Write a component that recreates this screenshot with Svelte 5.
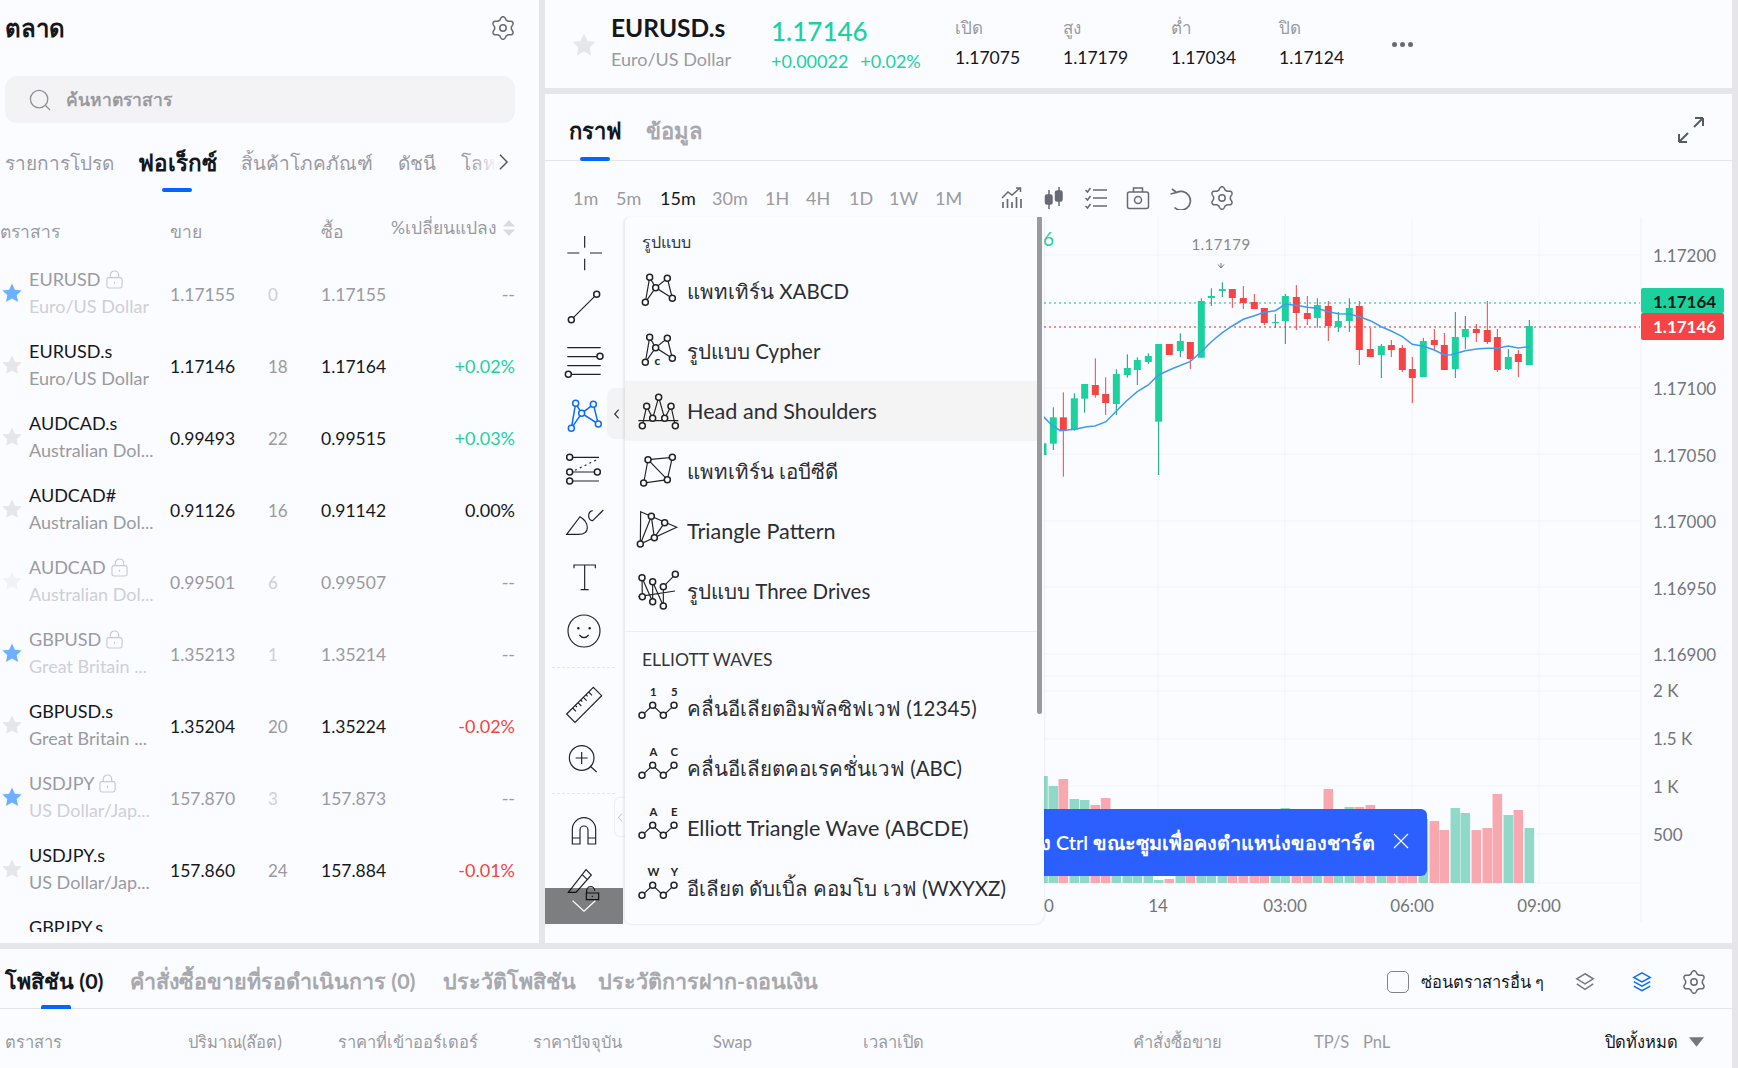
<script>
  const rows = [
    { name: 'EURUSD', sub: 'Euro/US Dollar', sell: '1.17155', spread: '0', buy: '1.17155', change: '--', locked: true, fav: true },
    { name: 'EURUSD.s', sub: 'Euro/US Dollar', sell: '1.17146', spread: '18', buy: '1.17164', change: '+0.02%', dir: 'up' },
    { name: 'AUDCAD.s', sub: 'Australian Dol...', sell: '0.99493', spread: '22', buy: '0.99515', change: '+0.03%', dir: 'up' },
    { name: 'AUDCAD#', sub: 'Australian Dol...', sell: '0.91126', spread: '16', buy: '0.91142', change: '0.00%' },
    { name: 'AUDCAD', sub: 'Australian Dol...', sell: '0.99501', spread: '6', buy: '0.99507', change: '--', locked: true },
    { name: 'GBPUSD', sub: 'Great Britain ...', sell: '1.35213', spread: '1', buy: '1.35214', change: '--', locked: true, fav: true },
    { name: 'GBPUSD.s', sub: 'Great Britain ...', sell: '1.35204', spread: '20', buy: '1.35224', change: '-0.02%', dir: 'down' },
    { name: 'USDJPY', sub: 'US Dollar/Jap...', sell: '157.870', spread: '3', buy: '157.873', change: '--', locked: true, fav: true },
    { name: 'USDJPY.s', sub: 'US Dollar/Jap...', sell: '157.860', spread: '24', buy: '157.884', change: '-0.01%', dir: 'down' },
    { name: 'GBPJPY.s', sub: '', sell: '', spread: '', buy: '', change: '' }
  ];

  const stats = [
    { label: 'เปิด', value: '1.17075' },
    { label: 'สูง', value: '1.17179' },
    { label: 'ต่ำ', value: '1.17034' },
    { label: 'ปิด', value: '1.17124' }
  ];

  const frames = ['1m', '5m', '15m', '30m', '1H', '4H', '1D', '1W', '1M'];

  // candles: x, wick top, wick bottom, body top, body bottom, up?
  // values taken in 3x units of the chart area, origin at (1030, 220)
  const raw = [
    [39,670,705,670,705,1],[70,562,690,592,671,1],[100,517,770,592,633,0],[133,520,632,535,629,1],
    [164,492,578,492,536,1],[196,415,533,495,525,0],[227,472,585,522,549,0],[259,448,585,462,552,1],
    [292,403,473,444,465,1],[322,412,495,420,450,1],[355,400,432,408,426,1],[386,372,765,372,605,1],
    [418,372,405,372,405,0],[451,340,411,363,393,1],[481,366,447,366,417,0],[514,235,414,243,413,1],
    [544,205,258,228,234,1],[577,187,231,207,213,1],[607,207,264,207,234,0],[640,198,267,234,249,0],
    [673,222,267,246,267,0],[703,264,315,264,309,0],[736,282,324,306,309,1],[766,222,372,228,303,1],
    [799,195,330,231,279,0],[832,228,315,279,297,0],[862,235,323,255,294,1],[895,243,363,258,318,0],
    [925,276,336,303,321,1],[958,235,336,264,303,1],[988,243,435,258,390,0],[1021,324,411,387,411,0],
    [1054,372,474,378,405,1],[1084,360,411,375,390,0],[1117,375,456,384,450,0],[1147,411,549,447,474,0],
    [1180,354,471,363,471,1],[1213,327,390,360,375,0],[1243,339,450,375,450,0],[1276,276,474,351,447,1],
    [1306,288,387,327,351,1],[1339,312,366,327,339,0],[1372,243,372,330,366,0],[1402,327,456,351,450,0],
    [1435,387,450,411,447,1],[1465,390,471,402,426,0],[1498,300,435,318,435,1]
  ];

  const volumeTops = {
    0: 776, 1: 786, 2: 779, 3: 799, 4: 800, 5: 805, 6: 798, 11: 880, 12: 879,
    23: 808, 27: 789, 29: 807, 30: 807, 31: 805, 36: 819, 37: 821, 38: 830, 39: 808,
    40: 813, 41: 830, 42: 828, 43: 794, 44: 815, 45: 810, 46: 828
  };

  const candles = raw.map(([x, wt, wb, bt, bb, up], i) => ({
    x: 1030 + x / 3,
    wickTop: 220 + wt / 3,
    wickBottom: 220 + wb / 3,
    bodyTop: 220 + bt / 3,
    bodyHeight: Math.max((bb - bt) / 3, 1),
    up: !!up,
    volumeTop: volumeTops[i] ?? 840
  }));

  const maLine = [
    [39,588],[60,610],[90,632],[135,628],[170,620],[195,618],[228,605],[260,572],[290,542],[322,515],
    [355,495],[385,465],[400,458],[430,445],[480,425],[514,395],[544,365],[577,338],[607,318],[640,298],
    [673,287],[703,277],[736,272],[766,253],[799,256],[832,262],[862,265],[895,275],[925,281],[958,282],
    [988,290],[1021,302],[1054,320],[1084,333],[1117,350],[1147,373],[1180,379],[1213,390],[1243,405],
    [1264,404],[1306,392],[1339,387],[1372,385],[1402,385],[1435,378],[1465,384],[1498,380]
  ].map(([x, y]) => `${(1030 + x / 3).toFixed(1)},${(220 + y / 3).toFixed(1)}`).join(' ');

  const priceLabels = [
    ['1.17200', 255], ['1.17100', 388], ['1.17050', 455], ['1.17000', 521], ['1.16950', 588], ['1.16900', 654]
  ];
  const volumeLabels = [['2 K', 691], ['1.5 K', 739], ['1 K', 787], ['500', 835]];
  const gridY = [255, 321, 388, 454, 521, 587, 654, 676, 691, 739, 786, 834, 883];
  const gridX = [1158, 1285, 1412, 1539];
  const times = [['0', 1049], ['14', 1158], ['03:00', 1285], ['06:00', 1412], ['09:00', 1539]];

  // six lobed gear outline, 24 unit box
  function makeGear() {
    let d = '';
    for (let i = 0; i < 120; i++) {
      const a = (i / 120) * Math.PI * 2;
      const r = 9.6 + 1.7 * Math.max(-0.7, Math.cos(6 * a));
      d += `${i ? 'L' : 'M'}${(12 + r * Math.sin(a)).toFixed(2)} ${(12 - r * Math.cos(a)).toFixed(2)}`;
    }
    return d + 'Z';
  }
  const gear = makeGear();

  const bottomTabs = ['โพสิชัน (0)', 'คำสั่งซื้อขายที่รอดำเนินการ (0)', 'ประวัติโพสิชัน', 'ประวัติการฝาก-ถอนเงิน'];
  const columns = ['ตราสาร', 'ปริมาณ(ล๊อต)', 'ราคาที่เข้าออร์เดอร์', 'ราคาปัจจุบัน', 'Swap', 'เวลาเปิด', 'คำสั่งซื้อขาย', 'TP/S', 'PnL'];
  const elliott = [
    { text: 'คลื่นอีเลียตอิมพัลซิฟเวฟ (12345)', a: '1', b: '5' },
    { text: 'คลื่นอีเลียตคอเรคชั่นเวฟ (ABC)', a: 'A', b: 'C' },
    { text: 'Elliott Triangle Wave (ABCDE)', a: 'A', b: 'E', latin: true },
    { text: 'อีเลียต ดับเบิ้ล คอมโบ เวฟ (WXYXZ)', a: 'W', b: 'Y' }
  ];
</script>

{#snippet gearIcon(cls)}
  <svg class={cls} viewBox="0 0 24 24" fill="none" stroke="currentColor" stroke-width="1.5">
    <path d={gear} /><circle cx="12" cy="12" r="3.2" />
  </svg>
{/snippet}

{#snippet star(fav, faint)}
  <svg class="star" class:fav class:faint viewBox="0 0 24 24">
    <path d="M12 1.5l3.2 6.9 7.3.9-5.4 5.1 1.5 7.4-6.6-3.7-6.6 3.7 1.5-7.4-5.4-5.1 7.3-.9z" />
  </svg>
{/snippet}

{#snippet nodes(points, color)}
  {#each points as p}
    <circle cx={p[0]} cy={p[1]} r="9" fill="#fafcff" stroke={color} stroke-width="4.5" />
  {/each}
{/snippet}

{#snippet patternIcon(cy, color)}
  <svg class="tool-svg" viewBox="{36} {cy - 66} 132 132" fill="none" stroke={color} stroke-width="4.5">
    <path d="M64 {cy + 40}L77 {cy - 35}L95 {cy - 5}L130 {cy - 32}L145 {cy + 27}L95 {cy - 5}L64 {cy + 40}" />
    {@render nodes([[77, cy - 35], [130, cy - 32], [95, cy - 5], [64, cy + 40], [145, cy + 27]], color)}
  </svg>
{/snippet}

{#snippet lock()}
  <svg class="lock" viewBox="0 0 18 20" fill="none" stroke="currentColor" stroke-width="1.2">
    <rect x="1" y="8" width="16" height="11" rx="2" /><path d="M4.5 8V5.5a4.5 4.5 0 0 1 9 0V8M9 12.5v2" />
  </svg>
{/snippet}

<div class="app">
  <aside class="market">
    <div class="market-title">
      <h1>ตลาด</h1>
      {@render gearIcon('gear')}
    </div>
    <div class="search">
      <svg viewBox="0 0 24 24" fill="none" stroke="currentColor" stroke-width="1.4">
        <circle cx="11" cy="11" r="9.5" /><path d="M18 18L23 23" />
      </svg>
      <span>ค้นหาตราสาร</span>
    </div>
    <nav class="market-tabs">
      <span>รายการโปรด</span>
      <span class="active">ฟอเร็กซ์</span>
      <span>สิ้นค้าโภคภัณฑ์</span>
      <span>ดัชนี</span>
      <span>โลหะ</span>
      <div class="tabs-more">
        <svg viewBox="0 0 12 20" fill="none" stroke="#555" stroke-width="1.6"><path d="M2 2l8 8-8 8" /></svg>
      </div>
    </nav>
    <div class="list-head">
      <span>ตราสาร</span>
      <span>ขาย</span>
      <span></span>
      <span>ซื้อ</span>
      <span class="change-head">%เปลี่ยนแปลง
        <svg viewBox="0 0 12 16" fill="#d9d9de"><path d="M6 0l6 6.5H0zM6 16l6-6.5H0z" /></svg>
      </span>
    </div>
    <div class="list">
      {#each rows as row}
        <div class="row" class:locked={row.locked}>
          {@render star(row.fav, row.locked && !row.fav)}
          <div class="names">
            <div class="symbol">{row.name}{#if row.locked}{@render lock()}{/if}</div>
            <div class="sub">{row.sub}</div>
          </div>
          <div class="num">{row.sell}</div>
          <div class="spread">{row.spread}</div>
          <div class="num">{row.buy}</div>
          <div class="change {row.dir ?? ''}">{row.change}</div>
        </div>
      {/each}
    </div>
  </aside>

  <main class="right">
    <header class="quote">
      {@render star(false, false)}
      <div class="quote-name">
        <div class="quote-symbol">EURUSD.s</div>
        <div class="quote-sub">Euro/US Dollar</div>
      </div>
      <div class="quote-price">
        <div class="price">1.17146</div>
        <div class="delta"><span>+0.00022</span><span>+0.02%</span></div>
      </div>
      {#each stats as s}
        <div class="stat">
          <div class="stat-label">{s.label}</div>
          <div class="stat-value">{s.value}</div>
        </div>
      {/each}
      <div class="dots"><i></i><i></i><i></i></div>
    </header>

    <section class="chart-panel">
      <div class="chart-tabs">
        <span class="active">กราฟ</span>
        <span>ข้อมูล</span>
        <svg class="expand" viewBox="0 0 26 26" fill="none" stroke="#555b66" stroke-width="2">
          <path d="M1 25L10 16M1 25v-8M1 25h8M25 1l-9 9M25 1v8M25 1h-8" />
        </svg>
      </div>
      <div class="frames">
        <div class="frame-list">
          {#each frames as f}
            <span class:current={f === '15m'}>{f}</span>
          {/each}
        </div>
        <div class="chart-tools">
          <svg viewBox="0 0 24 24" fill="none" stroke="currentColor" stroke-width="1.7">
            <path d="M3 22v-6M7.5 22v-9M12 22v-6M16.5 22v-11M21 22v-9" />
            <path d="M2 12l6-6 4 3 8-7M16 2h4.5v4" stroke-width="1.5" />
          </svg>
          <svg viewBox="0 0 24 24" fill="currentColor" stroke="currentColor" stroke-width="1.5">
            <path d="M7 4v19M17 1v19" fill="none" /><rect x="3.5" y="9" width="6.5" height="9" rx="1.5" /><rect x="13.5" y="5" width="6.5" height="10" rx="1.5" />
          </svg>
          <svg viewBox="0 0 24 24" fill="none" stroke="currentColor" stroke-width="1.5">
            <path d="M9 4h14M9 12h14M9 20h14M1.5 4l2 2 3-4M1.5 12l2 2 3-4M1.5 20l2 2 3-4" />
          </svg>
          <svg viewBox="0 0 24 24" fill="none" stroke="currentColor" stroke-width="1.5">
            <rect x="1.5" y="6" width="21" height="16.5" rx="2" /><path d="M7.5 6V2h9v4" /><circle cx="12" cy="14" r="3.5" />
          </svg>
          <svg viewBox="0 0 24 24" fill="none" stroke="currentColor" stroke-width="1.7">
            <path d="M4 3l4.5 3.5a9.4 9.4 0 1 1-2 15M8.5 6.5L2.5 8" />
          </svg>
          {@render gearIcon('tool-gear')}
        </div>
      </div>
      <div class="chart-body">
        <div class="toolbar">
          <div class="tool"><svg class="tool-svg" viewBox="36 32 132 132" fill="none" stroke="#222" stroke-width="3.5"><path d="M104 47v35M104 115v35M52 98h36M120 98h36" /></svg></div>
          <div class="tool"><svg class="tool-svg" viewBox="36 192 132 132" fill="none" stroke="#222" stroke-width="3.5"><path d="M64 296L140 220" />{@render nodes([[64, 296], [140, 220]], '#222')}</svg></div>
          <div class="tool"><svg class="tool-svg" viewBox="36 352 132 132" fill="none" stroke="#222" stroke-width="3.5"><path d="M52 378h100M52 405h100M52 432h100M55 458h97" />{@render nodes([[150, 404], [55, 458]], '#222')}</svg></div>
          <div class="tool picked">{@render patternIcon(580, '#0a6cff')}<span class="picked-tab"><svg viewBox="0 0 8 14" fill="none" stroke="#333" stroke-width="1.4"><path d="M6.5 2L2 7l4.5 5" /></svg></span></div>
          <div class="tool"><svg class="tool-svg" viewBox="36 680 132 132" fill="none" stroke="#222" stroke-width="3.5"><path d="M59 711h88M59 755h83M59 782h88" /><path d="M75 750L147 715" stroke-dasharray="6 10" />{@render nodes([[59, 711], [142, 755], [59, 755], [59, 782]], '#222')}</svg></div>
          <div class="tool"><svg class="tool-svg" viewBox="36 845 132 132" fill="none" stroke="#222" stroke-width="3.5"><path d="M50 945L90 892Q112 905 112 925T85 945ZM116 892Q115 876 128 874M160 872L128 904Q118 904 116 892" /></svg></div>
          <div class="tool"><svg class="tool-svg" viewBox="36 1002 132 132" fill="none" stroke="#222" stroke-width="3.5"><path d="M72 1042V1032H136V1042M104 1032V1106M92 1106H116" /></svg></div>
          <div class="tool"><svg class="tool-svg" viewBox="36 1164 132 132" fill="none" stroke="#222" stroke-width="3.5"><circle cx="102" cy="1230" r="48" /><path d="M88 1242Q102 1258 116 1242" /><circle cx="85" cy="1222" r="2" fill="#222" /><circle cx="119" cy="1222" r="2" fill="#222" /></svg></div>
          <div class="tool-sep"></div>
          <div class="tool"><svg class="tool-svg" viewBox="36 184 132 132" fill="none" stroke="#222" stroke-width="3.5"><path d="M50 280L130 200L155 225L75 305ZM68 262l10 10M84 246l10 10M100 230l10 10M116 214l10 10M76 254l5 5M92 238l5 5M108 222l5 5" /></svg></div>
          <div class="tool"><svg class="tool-svg" viewBox="36 342 132 132" fill="none" stroke="#222" stroke-width="3.5"><circle cx="95" cy="408" r="37" /><path d="M95 390v36M77 408h36M120 432l20 18" /></svg></div>
          <div class="tool-sep"></div>
          <div class="tool"><svg class="tool-svg" viewBox="36 564 132 132" fill="none" stroke="#222" stroke-width="3.5"><path d="M67 672V628a35 35 0 0 1 70 0V672H114V630a12 12 0 0 0-24 0V672ZM67 654H90M114 654H137" /></svg></div>
          <div class="tool"><svg class="tool-svg" viewBox="36 729 132 132" fill="none" stroke="#222" stroke-width="3.5"><path d="M55 820L108 752L124 768L78 820ZM96 766L112 782M110 823v-8a12 12 0 0 1 24 0M109 822h37v20h-37zM127 830v4" /></svg></div>
          <div class="side-handle"><svg viewBox="0 0 8 14" fill="none" stroke="#c9c9ce" stroke-width="1.4"><path d="M6.5 2L2 7l4.5 5" /></svg></div>
          <div class="more-tools">
            <svg viewBox="0 0 30 16" fill="none" stroke="#fff" stroke-width="1.4"><path d="M2 2l13 12L28 2" /></svg>
          </div>
        </div>

        <div class="menu">
          <div class="scrollbar"></div>
          <div class="menu-title first">รูปแบบ</div>
          <div class="menu-item">
            <svg class="menu-svg" viewBox="258 150 132 132" fill="none" stroke="#222" stroke-width="3.5"><path d="M286 250L299 175L317 206L352 178L367 238L317 206L286 250" />{@render nodes([[299, 175], [352, 178], [317, 206], [286, 250], [367, 238]], '#222')}</svg>
            <span>แพทเทิร์น XABCD</span>
          </div>
          <div class="menu-item">
            <svg class="menu-svg" viewBox="258 330 132 132" fill="none" stroke="#222" stroke-width="3.5"><path d="M286 430L299 355L317 386L352 358L367 418L317 386L286 430" />{@render nodes([[299, 355], [352, 358], [317, 386], [286, 430], [367, 418]], '#222')}<text x="322" y="437" class="icon-c">c</text></svg>
            <span>รูปแบบ Cypher</span>
          </div>
          <div class="menu-item hover latin">
            <svg class="menu-svg" viewBox="258 505 132 132" fill="none" stroke="#222" stroke-width="3.5"><path d="M265 600H385M277 615L290 557L308 593L326 530L344 593L363 557L376 615" />{@render nodes([[277, 615], [290, 557], [308, 593], [326, 530], [344, 593], [363, 557], [376, 615]], '#222')}</svg>
            <span>Head and Shoulders</span>
          </div>
          <div class="menu-item">
            <svg class="menu-svg" viewBox="258 690 132 132" fill="none" stroke="#222" stroke-width="3.5"><path d="M294 722L367 715L352 782L281 792ZM294 722L352 782" />{@render nodes([[294, 722], [367, 715], [352, 782], [281, 792]], '#222')}</svg>
            <span>แพทเทิร์น เอบีซีดี</span>
          </div>
          <div class="menu-item latin">
            <svg class="menu-svg" viewBox="258 867 132 132" fill="none" stroke="#222" stroke-width="3.5"><path d="M272 875L380 922L271 972ZM271 972L304 889L313 953L344 908" />{@render nodes([[304, 889], [344, 908], [313, 953], [271, 972]], '#222')}</svg>
            <span>Triangle Pattern</span>
          </div>
          <div class="menu-item">
            <svg class="menu-svg" viewBox="258 1049 132 132" fill="none" stroke="#222" stroke-width="3.5"><path d="M277 1132L276 1075L308 1147L308 1087L340 1160L340 1102L376 1065M265 1132L375 1115" />{@render nodes([[276, 1075], [308, 1087], [340, 1102], [277, 1132], [308, 1147], [340, 1160], [376, 1065]], '#222')}</svg>
            <span>รูปแบบ Three Drives</span>
          </div>
          <div class="menu-sep"></div>
          <div class="menu-title waves">ELLIOTT WAVES</div>
          {#each elliott as item}
            <div class="menu-item" class:latin={item.latin}>
              <svg class="menu-svg" viewBox="258 197 132 132" fill="none" stroke="#222" stroke-width="3.5">
                <path d="M276 285L308 255L340 285L372 255" />
                {@render nodes([[276, 285], [308, 255], [340, 285], [372, 255]], '#222')}
                <text x="310" y="228" class="icon-label">{item.a}</text>
                <text x="373" y="228" class="icon-label">{item.b}</text>
              </svg>
              <span>{item.text}</span>
            </div>
          {/each}
        </div>

        <div class="chart">
          <svg class="plot" viewBox="1044 217 688 726">
            {#each gridY as y}
              <line x1="1044" x2="1641" y1={y} y2={y} stroke="#f1f3f6" />
            {/each}
            {#each gridX as x}
              <line x1={x} x2={x} y1="217" y2="883" stroke="#f1f3f6" />
            {/each}
            <line x1="1641" x2="1641" y1="217" y2="923" stroke="#eef0f3" />
            {#each candles as c}
              <rect x={c.x - 4.8} y={c.volumeTop} width="9.6" height={883 - c.volumeTop} fill={c.up ? '#90d8c8' : '#f9a8b0'} />
            {/each}
            <line x1="1044" x2="1640" y1="303" y2="303" stroke="#4fd6b0" stroke-width="1.4" stroke-dasharray="2 3" />
            <line x1="1044" x2="1640" y1="327" y2="327" stroke="#f76a6a" stroke-width="1.4" stroke-dasharray="2 3" />
            {#each candles as c}
              <line x1={c.x} x2={c.x} y1={c.wickTop} y2={c.wickBottom} stroke={c.up ? '#0d9c80' : '#f64343'} />
              <rect x={c.x - 3.5} y={c.bodyTop} width="7" height={c.bodyHeight} fill={c.up ? '#1dd19f' : '#f64343'} />
            {/each}
            <polyline points={maLine} fill="none" stroke="#3d9bf5" stroke-width="1.5" />
            <text x="1221" y="250" class="high" text-anchor="middle">1.17179</text>
            <path d="M1221 263v5M1218 264.5l3 3.5 3-3.5" fill="none" stroke="#777" stroke-width="1" />
            <text x="1043" y="246" class="cut-value">6</text>
            {#each priceLabels as [text, y]}
              <text x="1653" y={y + 7} class="axis">{text}</text>
            {/each}
            {#each volumeLabels as [text, y]}
              <text x="1653" y={y + 6} class="axis">{text}</text>
            {/each}
            {#each times as [text, x]}
              <text {x} y="912" class="axis" text-anchor="middle">{text}</text>
            {/each}
            <rect x="1641" y="288" width="83" height="25" rx="2" fill="#1dd19f" />
            <rect x="1641" y="313" width="83" height="27" rx="2" fill="#f64343" />
            <text x="1653" y="308" class="axis tag-dark">1.17164</text>
            <text x="1653" y="333" class="axis tag-light">1.17146</text>
          </svg>
          <div class="toast">
            <span>กดค้าง Ctrl ขณะซูมเพื่อคงตำแหน่งของชาร์ต</span>
            <svg viewBox="0 0 16 16" fill="none" stroke="#fff" stroke-width="1.1"><path d="M1 1l14 14M15 1L1 15" /></svg>
          </div>
        </div>
      </div>
    </section>
  </main>

  <footer class="positions">
    <div class="pos-tabs">
      {#each bottomTabs as tab, i}
        <span class:active={i === 0}>{tab}</span>
      {/each}
      <div class="pos-tools">
        <label class="check"><i></i>ซ่อนตราสารอื่น ๆ</label>
        <svg viewBox="0 0 24 24" fill="none" stroke="#777" stroke-width="1.6"><path d="M12 3l9 5.5-9 5.5-9-5.5zM3 14l9 6 9-6" /></svg>
        <svg viewBox="0 0 24 24" fill="none" stroke="#0a6cff" stroke-width="1.6"><path d="M12 2l9 5-9 5-9-5zM3 11.5l9 5 9-5M3 16.5l9 5 9-5" /></svg>
        {@render gearIcon('pos-gear')}
      </div>
    </div>
    <div class="pos-head">
      {#each columns as c}
        <span>{c}</span>
      {/each}
      <span class="close-all">ปิดทั้งหมด<svg viewBox="0 0 16 10" fill="#777"><path d="M0 0h16L8 10z" /></svg></span>
    </div>
  </footer>
</div>

<style>
  :global(body) {
    margin: 0;
    background: #e6e6ea;
  }

  .app {
    width: 1738px;
    height: 1068px;
    display: grid;
    grid-template-columns: 539px 1187px;
    grid-template-rows: 943px 119px;
    column-gap: 6px;
    row-gap: 6px;
    background: #e6e6ea;
    font-family: 'Lato', 'Noto Sans', 'Noto Sans CJK SC', sans-serif;
    color: #15171c;
    overflow: hidden;
  }

  /* market list */
  .market {
    background: #fafcff;
    overflow: hidden;
    display: flex;
    flex-direction: column;
  }

  .market-title {
    height: 56px;
    display: flex;
    align-items: center;
    justify-content: space-between;
    padding: 0 24px 0 5px;
  }

  h1 {
    margin: 0;
    font-size: 24px;
    font-weight: 700;
  }

  .gear {
    width: 24px;
    height: 24px;
    color: #676a73;
  }

  .search {
    margin: 20px 24px 0 5px;
    height: 47px;
    border-radius: 12px;
    background: #f3f3f5;
    display: flex;
    align-items: center;
    gap: 15px;
    padding-left: 24px;
    font-size: 17.5px;
    font-weight: 700;
    color: #9a9a9f;
  }

  .search svg {
    width: 22px;
    height: 22px;
    color: #8c8f96;
  }

  .market-tabs {
    position: relative;
    height: 69px;
    display: grid;
    grid-template-columns: 133px 103px 157px 63px 60px;
    padding-left: 5px;
    padding-top: 25px;
    box-sizing: border-box;
    font-size: 19px;
    line-height: 30px;
    color: #9a9a9f;
    white-space: nowrap;
  }

  .market-tabs .active {
    position: relative;
    color: #15171c;
    font-size: 22.5px;
    font-weight: 700;
  }

  .market-tabs .active::after {
    content: '';
    position: absolute;
    left: 24px;
    top: 40px;
    width: 30px;
    height: 4px;
    border-radius: 2px;
    background: #0066ff;
  }

  .tabs-more {
    position: absolute;
    left: 470px;
    top: 21px;
    width: 45px;
    height: 36px;
    background: linear-gradient(90deg, rgba(250, 252, 255, 0), #fafcff 60%);
    display: flex;
    align-items: center;
    justify-content: flex-end;
    padding-right: 6px;
    box-sizing: border-box;
  }

  .tabs-more svg {
    width: 11px;
    height: 18px;
  }

  .list-head {
    height: 65px;
    box-sizing: border-box;
    padding-top: 26px;
    display: grid;
    grid-template-columns: 170px 98px 53px 60px 134px;
    font-size: 17.5px;
    color: #9a9a9f;
    white-space: nowrap;
  }

  .change-head {
    display: flex;
    justify-content: flex-end;
    align-items: center;
    gap: 6px;
    height: 20px;
  }

  .change-head svg {
    width: 12px;
    height: 16px;
  }

  .list {
    height: 675px;
    overflow: hidden;
  }

  .row {
    height: 72px;
    display: grid;
    grid-template-columns: 29px 141px 98px 53px 60px 134px;
    align-items: center;
    font-size: 17.5px;
  }

  .star {
    width: 22px;
    height: 22px;
    margin-left: 1px;
    fill: #e6e6ea;
  }

  .star.fav {
    fill: #6cb0ff;
  }

  .star.faint {
    fill: #f2f2f5;
  }

  .names {
    min-width: 0;
  }

  .symbol {
    height: 27px;
    line-height: 27px;
    font-size: 18px;
    display: flex;
    align-items: center;
    gap: 5px;
  }

  .sub {
    height: 27px;
    line-height: 27px;
    font-size: 18px;
    color: #9a9a9f;
    white-space: nowrap;
  }

  .lock {
    width: 17px;
    height: 19px;
    color: #c9c9ce;
  }

  .num {
    padding-top: 2.5px;
  }

  .spread {
    padding-top: 2.5px;
    color: #9a9a9f;
    font-size: 17px;
  }

  .change {
    padding-top: 2.5px;
    font-size: 18px;
    text-align: right;
    grid-column: 6;
  }

  .up {
    color: #1dd19f;
  }

  .down {
    color: #f64343;
  }

  .locked .symbol,
  .locked .num,
  .locked .change {
    color: #9a9a9f;
  }

  .locked .sub,
  .locked .spread {
    color: #cfcfd4;
  }

  /* quote header */
  .right {
    display: flex;
    flex-direction: column;
    gap: 6px;
    min-width: 0;
  }

  .quote {
    height: 88px;
    background: #fafcff;
    display: flex;
    align-items: center;
    padding-left: 26px;
    white-space: nowrap;
  }

  .quote .star {
    width: 26px;
    height: 26px;
    margin: 2px 14px 0 0;
  }

  .quote-name {
    width: 160px;
  }

  .quote-symbol {
    font-size: 24.5px;
    font-weight: 700;
    line-height: 30px;
  }

  .quote-sub {
    font-size: 18px;
    color: #9a9a9f;
    line-height: 32px;
  }

  .quote-price {
    width: 184px;
    color: #1dd19f;
  }

  .price {
    font-size: 26px;
    font-weight: 500;
    line-height: 34px;
  }

  .delta {
    display: flex;
    gap: 12px;
    font-size: 18px;
    line-height: 26px;
  }

  .stat {
    width: 108px;
    margin-top: -2px;
  }

  .stat-label {
    font-size: 17px;
    color: #9a9a9f;
    line-height: 30px;
  }

  .stat-value {
    font-size: 17.5px;
    line-height: 30px;
  }

  .dots {
    display: flex;
    gap: 3px;
    margin-left: 5px;
  }

  .dots i {
    width: 5px;
    height: 5px;
    border-radius: 50%;
    background: #676a73;
  }

  /* chart panel */
  .chart-panel {
    flex: 1;
    background: #fafcff;
    display: flex;
    flex-direction: column;
    min-height: 0;
  }

  .chart-tabs {
    position: relative;
    height: 67px;
    box-sizing: border-box;
    border-bottom: 1px solid #e3e5e9;
    padding: 22px 0 0 24px;
    display: flex;
    gap: 24px;
    font-size: 22px;
    line-height: 30px;
    font-weight: 700;
    color: #a8a8ad;
  }

  .chart-tabs .active {
    position: relative;
    color: #15171c;
  }

  .chart-tabs .active::after {
    content: '';
    position: absolute;
    left: 11px;
    top: 41px;
    width: 30px;
    height: 4px;
    border-radius: 2px;
    background: #0066ff;
  }

  .expand {
    position: absolute;
    left: 1133px;
    top: 23px;
    width: 26px;
    height: 26px;
  }

  .frames {
    height: 56px;
    display: flex;
    align-items: center;
    padding-left: 28px;
    padding-top: 18px;
    box-sizing: border-box;
  }

  .frame-list {
    display: grid;
    grid-template-columns: 43px 44px 52px 53px 41px 43px 40px 46px 42px;
    width: 400px;
    font-size: 18px;
    color: #9a9a9f;
  }

  .frame-list .current {
    color: #15171c;
  }

  .chart-tools {
    display: flex;
    gap: 18px;
    margin-left: 27px;
    color: #676a73;
  }

  .chart-tools svg,
  .tool-gear {
    width: 24px;
    height: 24px;
  }

  .chart-body {
    flex: 1;
    position: relative;
    display: flex;
    min-height: 0;
  }

  .toolbar {
    position: relative;
    width: 80px;
    height: 707px;
    box-sizing: border-box;
    padding-top: 9px;
    overflow: hidden;
    flex: none;
  }

  .tool {
    position: relative;
    height: 54px;
    display: flex;
    align-items: center;
    justify-content: center;
    padding-right: 2px;
  }

  .tool-svg {
    width: 44px;
    height: 44px;
  }

  .picked-tab {
    position: absolute;
    right: 0;
    top: 0;
    width: 18px;
    height: 51px;
    border-radius: 8px 0 0 8px;
    background: #f3f3f5;
    display: flex;
    align-items: center;
    justify-content: center;
  }

  .picked-tab svg {
    width: 7px;
    height: 12px;
  }

  .side-handle {
    position: absolute;
    right: 0;
    top: 580px;
    width: 11px;
    height: 40px;
    box-sizing: border-box;
    border: 1px solid #eceef1;
    border-right: 0;
    border-radius: 6px 0 0 6px;
    display: flex;
    align-items: center;
    justify-content: center;
  }

  .side-handle svg {
    width: 6px;
    height: 11px;
  }

  .tool-sep {
    height: 0;
    margin: 8.75px 10px 8.75px 7px;
    border-top: 1px dashed #e3e5e9;
  }

  .more-tools {
    position: absolute;
    left: 0;
    bottom: 0;
    width: 78px;
    height: 36px;
    background: rgba(0, 0, 0, 0.5);
    display: flex;
    align-items: center;
    justify-content: center;
  }

  .more-tools svg {
    width: 28px;
    height: 14px;
  }

  .menu {
    position: relative;
    z-index: 2;
    width: 419px;
    height: 707px;
    box-sizing: border-box;
    padding-right: 7px;
    flex: none;
    overflow: hidden;
    background: #fafcff;
    border-radius: 6px 0 10px 6px;
    box-shadow: -2px 0 2px rgba(0, 0, 0, 0.07), 1px 1px 2px rgba(0, 0, 0, 0.06);
  }

  .scrollbar {
    position: absolute;
    right: 2px;
    top: 0;
    width: 5px;
    height: 497px;
    border-radius: 0 0 3px 3px;
    background: #999a9e;
  }

  .menu-title {
    padding: 8px 0 0 17px;
    height: 47px;
    box-sizing: border-box;
    display: flex;
    align-items: center;
    font-size: 16px;
    color: #33353a;
  }

  .menu-title.first {
    padding-top: 6px;
    height: 44px;
  }

  .menu-title.waves {
    font-size: 17.5px;
    height: 46px;
  }

  .menu-item {
    height: 60px;
    display: flex;
    align-items: center;
    gap: 7px;
    padding-left: 11px;
    font-size: 20.5px;
    color: #2c2e33;
    white-space: nowrap;
  }

  .menu-item.latin {
    font-size: 21.6px;
  }

  .menu-item.hover {
    background: #f4f4f5;
  }

  .menu-svg {
    width: 44px;
    height: 44px;
    flex: none;
  }

  .icon-c {
    font-size: 36px;
    fill: #222;
    stroke: none;
    text-anchor: middle;
    font-weight: 700;
  }

  .icon-label {
    font-size: 34px;
    fill: #222;
    stroke: none;
    text-anchor: middle;
    font-weight: 700;
  }

  .menu-sep {
    margin-top: 10px;
    border-top: 1px solid #eceef1;
  }

  .chart {
    position: relative;
    flex: 1;
    min-width: 0;
  }

  .plot {
    display: block;
    width: 688px;
    height: 726px;
  }

  .axis {
    font-size: 17px;
    fill: #73757a;
  }

  .high {
    font-size: 15px;
    letter-spacing: 0.5px;
    fill: #88898e;
  }

  .cut-value {
    font-size: 19px;
    fill: #1dd19f;
  }

  .axis.tag-dark {
    fill: #0b1a16;
    font-weight: 700;
  }

  .axis.tag-light {
    fill: #fff;
    font-weight: 700;
  }

  .toast {
    position: absolute;
    left: 0;
    top: 592px;
    width: 383px;
    height: 67px;
    border-radius: 0 6px 6px 0;
    background: #2b60ff;
    color: #fff;
    display: flex;
    align-items: center;
    justify-content: flex-end;
    gap: 18px;
    padding-right: 18px;
    box-sizing: border-box;
    overflow: hidden;
    font-size: 19.8px;
    font-weight: 600;
    white-space: nowrap;
  }

  .toast svg {
    width: 16px;
    height: 16px;
    margin-bottom: 4px;
    flex: none;
  }

  /* positions */
  .positions {
    grid-column: 1 / 3;
    background: #fafcff;
    font-size: 21.5px;
  }

  .pos-tabs {
    height: 60px;
    box-sizing: border-box;
    border-bottom: 1px solid #e3e5e9;
    display: grid;
    grid-template-columns: 125px 313px 155px 1fr;
    align-items: center;
    padding: 4px 0 0 5px;
    line-height: 30px;
    position: relative;
    font-weight: 700;
    color: #a8a8ad;
    white-space: nowrap;
  }

  .pos-tabs .active {
    position: relative;
    color: #15171c;
  }

  .pos-tabs .active::after {
    content: '';
    position: absolute;
    left: 36px;
    top: 39.5px;
    width: 30px;
    height: 3.5px;
    border-radius: 2px 2px 0 0;
    background: #0066ff;
  }

  .pos-tools {
    position: absolute;
    left: 1387px;
    top: 18px;
    display: flex;
    align-items: center;
    gap: 35px;
    color: #676a73;
  }

  .pos-tools svg {
    width: 22px;
    height: 22px;
  }

  .pos-tools .pos-gear {
    width: 24px;
    height: 24px;
    margin-left: -6px;
  }

  .check {
    width: 152px;
    display: flex;
    align-items: center;
    gap: 12px;
    font-size: 16.5px;
    font-weight: 500;
    color: #15171c;
  }

  .check i {
    width: 20px;
    height: 20px;
    border: 1px solid #80838c;
    border-radius: 5px;
    flex: none;
  }

  .pos-head {
    height: 66px;
    display: grid;
    grid-template-columns: 183px 150px 195px 180px 150px 270px 181px 49px 242px 1fr;
    align-items: center;
    padding-left: 5px;
    font-size: 16.5px;
    color: #9a9a9f;
    white-space: nowrap;
  }

  .close-all {
    display: flex;
    align-items: center;
    gap: 11px;
    color: #15171c;
    font-weight: 500;
  }

  .close-all svg {
    width: 15px;
    height: 10px;
  }
</style>
